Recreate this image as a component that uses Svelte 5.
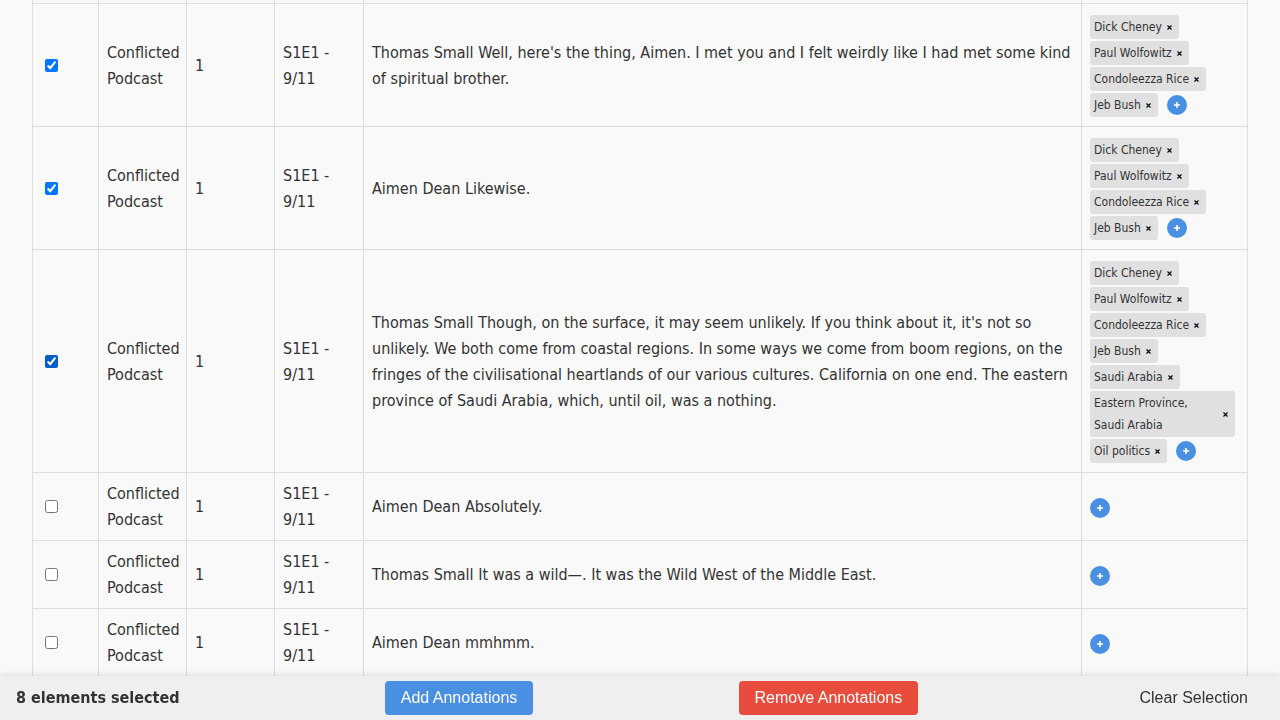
<script>
  const people = ['Dick Cheney', 'Paul Wolfowitz', 'Condoleezza Rice', 'Jeb Bush'];

  let rows = $state([
    {
      checked: true,
      text: "Thomas Small Well, here's the thing, Aimen. I met you and I felt weirdly like I had met some kind of spiritual brother.",
      tags: [...people]
    },
    { checked: true, text: 'Aimen Dean Likewise.', tags: [...people] },
    {
      checked: true,
      focused: true,
      text: "Thomas Small Though, on the surface, it may seem unlikely. If you think about it, it's not so unlikely. We both come from coastal regions. In some ways we come from boom regions, on the fringes of the civilisational heartlands of our various cultures. California on one end. The eastern province of Saudi Arabia, which, until oil, was a nothing.",
      tags: [...people, 'Saudi Arabia', 'Eastern Province, Saudi Arabia', 'Oil politics']
    },
    { checked: false, text: 'Aimen Dean Absolutely.', tags: [] },
    { checked: false, text: 'Thomas Small It was a wild—. It was the Wild West of the Middle East.', tags: [] },
    { checked: false, text: 'Aimen Dean mmhmm.', tags: [] }
  ]);

  // Rows selected further up the transcript
  const selectedAbove = 5;
  let selected = $derived(selectedAbove + rows.filter((r) => r.checked).length);

  function removeTag(row, index) {
    row.tags.splice(index, 1);
  }
</script>

<main>
  <table>
    <colgroup>
      <col class="c-check" />
      <col class="c-name" />
      <col class="c-season" />
      <col class="c-episode" />
      <col />
      <col class="c-tags" />
    </colgroup>
    <tbody>
      <tr class="edge"><td></td><td></td><td></td><td></td><td></td><td></td></tr>
      {#each rows as row, i}
        <tr>
          <td class="check">
            <input type="checkbox" class:focused={row.focused} bind:checked={row.checked} aria-label="Select row {i + 1}" />
          </td>
          <td>Conflicted Podcast</td>
          <td>1</td>
          <td>S1E1 - 9/11</td>
          <td>{row.text}</td>
          <td class="annotations">
            <div class="tags">
              {#each row.tags as tag, t}
                <span class="tag">
                  <span>{tag}</span>
                  <button class="remove" aria-label="Remove {tag}" onclick={() => removeTag(row, t)}>
                    <svg viewBox="0 0 5 5" width="5" height="5" aria-hidden="true"><path d="M.5.5l4 4M4.5.5l-4 4" /></svg>
                  </button>
                </span>
              {/each}
              <button class="add" aria-label="Add annotation">
                <svg viewBox="0 0 8 8" width="8" height="8" aria-hidden="true"><path d="M4 1v6M1 4h6" /></svg>
              </button>
            </div>
          </td>
        </tr>
      {/each}
    </tbody>
  </table>
</main>

<footer>
  <strong>{selected} elements selected</strong>
  <button class="primary">Add Annotations</button>
  <button class="danger">Remove Annotations</button>
  <button class="plain">Clear Selection</button>
</footer>

<style>
  :global(body) {
    margin: 0;
    background: #f9f9f9;
    color: #333;
    font-family: 'DejaVu Sans Condensed', 'DejaVu Sans', sans-serif;
    font-size: 16px;
    line-height: 26px;
  }

  :global(html) {
    scrollbar-width: none;
  }

  main {
    padding: 0 32px 44px;
  }

  table {
    width: 100%;
    border-collapse: collapse;
    table-layout: fixed;
  }

  .c-check {
    width: 66px;
  }

  .c-name,
  .c-season {
    width: 88px;
  }

  .c-episode {
    width: 89px;
  }

  .c-tags {
    width: 166px;
  }

  td {
    padding: 8px 8px 7px;
    border: 1px solid #ddd;
    vertical-align: middle;
  }

  .edge td {
    height: 3px;
    padding: 0;
    border-top: 0;
  }

  .check {
    padding: 0 12px;
  }

  input {
    display: block;
    width: 13px;
    height: 13px;
    margin: 0;
    accent-color: #0075ff;
  }

  input.focused {
    accent-color: #005cc8;
  }

  .annotations {
    padding: 11px 12px 9px 8px;
  }

  .tags {
    display: flex;
    flex-wrap: wrap;
    align-items: center;
    gap: 2px 9px;
  }

  .tag {
    display: flex;
    align-items: center;
    justify-content: space-between;
    box-sizing: border-box;
    max-width: 100%;
    padding: 1px 4px;
    border-radius: 3px;
    background: #e0e0e0;
    font-size: 12px;
    line-height: 22px;
  }

  button {
    border: 0;
    font: 16px/18px 'Liberation Sans', Arial, sans-serif;
    cursor: pointer;
  }

  svg {
    display: block;
    fill: none;
    stroke: currentColor;
  }

  .remove {
    padding: 0 3px 0 5px;
    background: none;
    color: #000;
  }

  .remove svg {
    stroke-width: 1.1;
  }

  .add {
    display: grid;
    place-items: center;
    width: 20px;
    height: 20px;
    padding: 0;
    border-radius: 50%;
    background: #4a90e2;
    color: #fff;
  }

  .add svg {
    stroke-width: 1.6;
  }

  footer {
    position: fixed;
    inset: auto 0 0;
    display: flex;
    align-items: center;
    justify-content: space-between;
    box-sizing: border-box;
    min-height: 44px;
    padding: 4px 16px;
    background: #efefef;
    box-shadow: 0 -2px 5px rgba(0, 0, 0, 0.1);
  }

  footer button {
    padding: 8px 16px;
    border-radius: 4px;
    color: #fff;
  }

  .primary {
    background: #4a90e2;
  }

  .danger {
    background: #e74c3c;
  }

  .plain {
    background: none;
    color: #333;
  }
</style>
